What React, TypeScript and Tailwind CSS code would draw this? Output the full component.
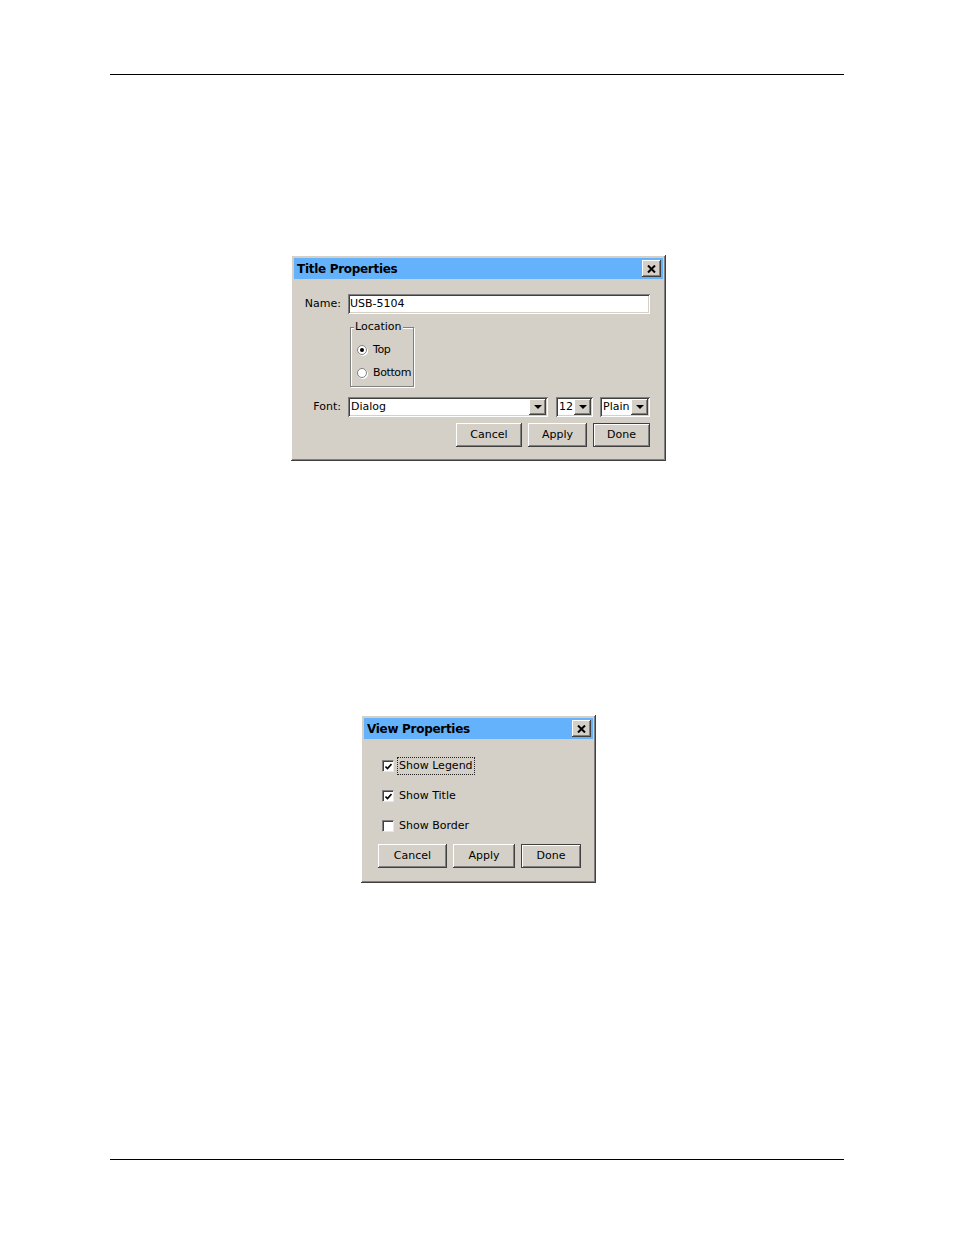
import React from 'react';

const raised = 'bg-[#d4d0c8] shadow-[inset_-1px_-1px_#404040,inset_1px_1px_#ffffff,inset_-2px_-2px_#808080]';
const sunken = 'bg-white shadow-[inset_1px_1px_#808080,inset_-1px_-1px_#ffffff,inset_2px_2px_#404040,inset_-2px_-2px_#d4d0c8]';

function CloseButton() {
  return (
    <div className={`w-[19px] h-[17px] mr-[2px] flex items-center justify-center ${raised}`}>
      <svg width="9" height="8" viewBox="0 0 9 8">
        <path d="M1 0.5 L8 7.5 M8 0.5 L1 7.5" stroke="#000" strokeWidth="2" />
      </svg>
    </div>
  );
}

function TitleBar({ title }: { title: string }) {
  return (
    <div className="h-[21px] bg-[#65b2fc] flex items-center justify-between pl-[3px]">
      <span className="font-bold text-[12px] text-black tracking-[-0.3px]">{title}</span>
      <CloseButton />
    </div>
  );
}

function Button({ label, width, isDefault }: { label: string; width: number; isDefault?: boolean }) {
  const cls = isDefault
    ? 'shadow-[inset_1px_1px_#404040,inset_-1px_-1px_#404040,inset_2px_2px_#ffffff,inset_-2px_-2px_#808080]'
    : 'shadow-[inset_-1px_-1px_#404040,inset_1px_1px_#ffffff,inset_-2px_-2px_#808080]';
  return (
    <div
      className={`h-[24px] bg-[#d4d0c8] flex items-center justify-center text-[11px] text-black ${cls}`}
      style={{ width }}
    >
      {label}
    </div>
  );
}

function DropArrow() {
  return (
    <div className={`w-[17px] h-[16px] flex items-center justify-center ${raised}`}>
      <svg width="8" height="4" viewBox="0 0 8 4">
        <path d="M0 0 H8 L4 4 Z" fill="#000" />
      </svg>
    </div>
  );
}

function Combo({ value, width }: { value: string; width: number }) {
  return (
    <div className={`h-[20px] flex items-center pl-[3px] pr-[2px] ${sunken}`} style={{ width }}>
      <span className="flex-1 text-[11px] text-black">{value}</span>
      <DropArrow />
    </div>
  );
}

function Radio({ checked, label }: { checked?: boolean; label: string }) {
  return (
    <div className="flex items-center gap-[6px] h-[12px]">
      <div className="w-[10px] h-[10px] rounded-full bg-white border border-[#808080] flex items-center justify-center shadow-[1px_1px_0_#ffffff]">
        {checked && <div className="w-[4px] h-[4px] rounded-full bg-black" />}
      </div>
      <span className="text-[11px] text-black tracking-[-0.4px]">{label}</span>
    </div>
  );
}

function Checkbox({ checked, label, focused }: { checked?: boolean; label: string; focused?: boolean }) {
  return (
    <div className="flex items-center gap-[4px] h-[16px]">
      <div className="w-[12px] h-[12px] bg-white border border-[#808080] border-r-[#e8e8e8] border-b-[#e8e8e8] shadow-[inset_1px_1px_#404040] flex items-center justify-center">
        {checked && (
          <svg width="7" height="7" viewBox="0 0 7 7">
            <path d="M0.5 3.5 L2.5 5.5 L6.5 1" stroke="#000" strokeWidth="1.6" fill="none" />
          </svg>
        )}
      </div>
      <span
        className={`text-[11px] text-black px-[1px] ${focused ? 'outline outline-1 outline-dotted outline-[#222]' : ''}`}
      >
        {label}
      </span>
    </div>
  );
}

function TitleProperties() {
  return (
    <div className={`w-[375px] h-[206px] p-[3px] ${raised} font-['DejaVu_Sans',sans-serif]`}>
      <TitleBar title="Title Properties" />
      <div>
        {/* Name row */}
        <div className="flex items-center mt-[15px]">
          <span className="w-[47px] text-right text-[11px] text-black">Name:</span>
          <div className={`ml-[7px] w-[302px] h-[20px] flex items-center pl-[2px] text-[11px] text-black ${sunken}`}>
            USB-5104
          </div>
        </div>

        {/* Location group */}
        <div className="ml-[56px] mt-[13px] w-[64px] h-[60px] border border-[#808080] shadow-[inset_1px_1px_#ffffff,1px_1px_#ffffff] relative">
          <span className="absolute -top-[8px] left-[3px] px-[1px] bg-[#d4d0c8] text-[11px] text-black leading-[14px]">
            Location
          </span>
          <div className="flex flex-col gap-[11px] pl-[6px] pt-[16px]">
            <Radio checked label="Top" />
            <Radio label="Bottom" />
          </div>
        </div>

        {/* Font row */}
        <div className="flex items-center mt-[10px]">
          <span className="w-[47px] text-right text-[11px] text-black">Font:</span>
          <div className="ml-[7px] flex items-center">
            <Combo value="Dialog" width={200} />
            <div className="ml-[8px]">
              <Combo value="12" width={37} />
            </div>
            <div className="ml-[7px]">
              <Combo value="Plain" width={50} />
            </div>
          </div>
        </div>

        {/* Buttons */}
        <div className="flex mt-[6px] ml-[162px] gap-[6px]">
          <Button label="Cancel" width={66} />
          <Button label="Apply" width={59} />
          <Button label="Done" width={57} isDefault />
        </div>
      </div>
    </div>
  );
}

function ViewProperties() {
  return (
    <div className={`w-[235px] h-[168px] p-[3px] ${raised} font-['DejaVu_Sans',sans-serif]`}>
      <TitleBar title="View Properties" />
      <div className="flex flex-col gap-[14px] pl-[18px] mt-[19px]">
        <Checkbox checked focused label="Show Legend" />
        <Checkbox checked label="Show Title" />
        <Checkbox label="Show Border" />
      </div>
      <div className="flex mt-[10px] ml-[14px] gap-[6px]">
        <Button label="Cancel" width={69} />
        <Button label="Apply" width={62} />
        <Button label="Done" width={60} isDefault />
      </div>
    </div>
  );
}

export default function App() {
  return (
    <div className="w-[954px] h-[1235px] bg-white flex flex-col">
      <div className="mt-[74px] ml-[110px] w-[734px] h-px bg-black" />
      <div className="mt-[180px] ml-[291px]">
        <TitleProperties />
      </div>
      <div className="mt-[254px] ml-[361px]">
        <ViewProperties />
      </div>
      <div className="mt-[276px] ml-[110px] w-[734px] h-px bg-black" />
    </div>
  );
}
